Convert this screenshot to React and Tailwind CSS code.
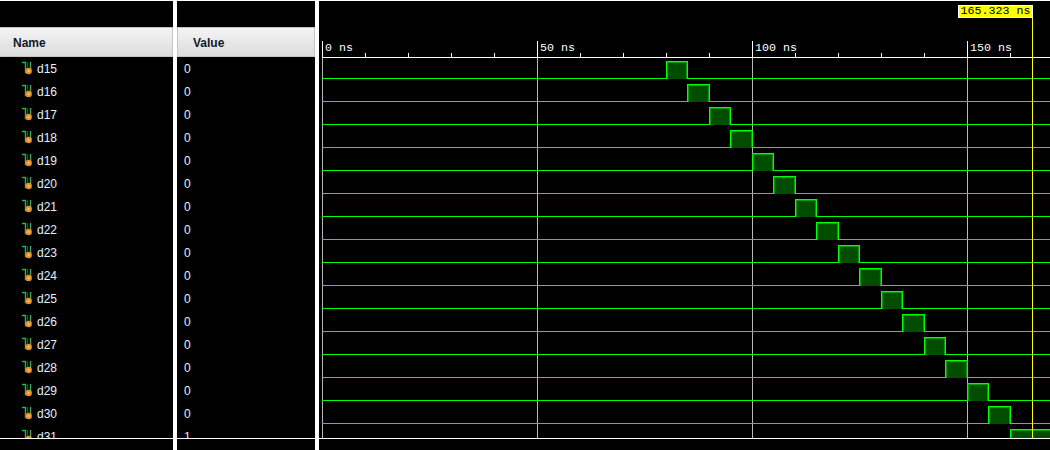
const rows = [
  ['d15', '0'], ['d16', '0'], ['d17', '0'], ['d18', '0'], ['d19', '0'], ['d20', '0'],
  ['d21', '0'], ['d22', '0'], ['d23', '0'], ['d24', '0'], ['d25', '0'], ['d26', '0'],
  ['d27', '0'], ['d28', '0'], ['d29', '0'], ['d30', '0'], ['d31', '1'],
]

// 215px = 50ns, x0 is 3px into the wave panel
const PX_NS = 4.3
const X0 = 3
const xAt = (ns) => Math.floor(X0 + ns * PX_NS)
const W = 731

const SignalIcon = () => (
  <svg width="14" height="15" viewBox="0 0 14 15" className="shrink-0">
    <path d="M2 1.5H5.5V11.5H7" fill="none" stroke="#2fb04f" strokeWidth="1.4" />
    <path d="M10.5 1V8" fill="none" stroke="#2fb04f" strokeWidth="1.4" />
    <path d="M7.5 1V7" fill="none" stroke="#14602a" />
    <circle cx="8.7" cy="10" r="3.2" fill="#e8912a" />
    <circle cx="8.7" cy="10" r="1" fill="#ffd27a" />
  </svg>
)

const Header = ({ label, className }) => (
  <div
    className={`h-[30px] shrink-0 flex items-center pt-[2px] border-y border-[#c4c4c4] bg-gradient-to-b from-[#f4f4f4] to-[#dcdcdc] text-[12px] font-bold text-[#111827] ${className}`}
  >
    {label}
  </div>
)

const Wave = () => (
  <svg width={W} height="380" viewBox="0 0 731 380" shapeRendering="crispEdges" className="block">
    {[0, 50, 100, 150].map((ns) => (
      <path key={ns} d={`M${xAt(ns) + 0.5} 0V380`} stroke="#b8b8b8" />
    ))}
    {rows.map((row, i) => {
      const start = xAt(80 + i * 5)
      const high = row[1] === '1'
      const end = high ? W + 2 : xAt(85 + i * 5)
      const top = 3.5 + i * 23
      const base = 20.5 + i * 23
      return (
        <g key={row[0]}>
          <rect x={start} y={top} width={end - start} height={base - top} fill="#004d00" />
          {/* soft inner edge, the reference pulses look 2px thick */}
          <path
            d={`M${start + 1.5} ${base}V${top + 1}H${end - 0.5}V${base}`}
            fill="none"
            stroke="#00a000"
          />
          <path
            d={`M3 ${base}H${start + 0.5}V${top}H${end + 0.5}V${base}H${W}`}
            fill="none"
            stroke="#00ff00"
          />
        </g>
      )
    })}
  </svg>
)

const Ruler = () => {
  const ticks = []
  for (let ns = 0; ns <= 170; ns += 10) ticks.push(ns)
  return (
    <svg width={W} height="31" viewBox="0 0 731 31" shapeRendering="crispEdges" className="block">
      <path d="M3 30.5H731" stroke="#ffffff" />
      {ticks.map((ns) =>
        ns % 50 === 0 ? (
          <g key={ns}>
            <path d={`M${xAt(ns) + 0.5} 14V31`} stroke="#ffffff" />
            <text
              x={xAt(ns) + 3}
              y="24"
              fill="#ffffff"
              fontSize="11.67"
              fontFamily='"Liberation Mono", monospace'
            >
              {ns} ns
            </text>
          </g>
        ) : (
          <path key={ns} d={`M${xAt(ns) + 0.5} 26V31`} stroke="#ffffff" />
        )
      )}
    </svg>
  )
}

export default function App() {
  return (
    <div className="relative w-[1050px] h-[450px] bg-black overflow-hidden font-['Liberation_Sans',Arial,sans-serif]">
      <div className="h-px bg-white" />
      <div className="flex h-[449px]">
        {/* names */}
        <div className="w-[173px] flex flex-col">
          <div className="h-[26px] shrink-0" />
          <Header label="Name" className="pl-[13px] border-r" />
          <div className="h-[382px] overflow-hidden border-b border-white">
            {rows.map((row) => (
              <div key={row[0]} className="h-[23px] flex items-center pl-[20px] gap-[3px] text-[12px] text-[#e5efff]">
                <SignalIcon />
                <span>{row[0]}</span>
              </div>
            ))}
          </div>
        </div>
        <div className="w-[4px] bg-white" />

        {/* values */}
        <div className="w-[138px] flex flex-col">
          <div className="h-[26px] shrink-0" />
          <Header label="Value" className="pl-[15px] border-x" />
          <div className="h-[382px] overflow-hidden border-b border-white">
            {rows.map((row) => (
              <div key={row[0]} className="h-[23px] flex items-center pl-[7px] text-[12px] text-[#e5efff]">
                {row[1]}
              </div>
            ))}
          </div>
        </div>
        <div className="w-[4px] bg-white" />

        {/* waveform */}
        <div className="relative w-[731px]">
          <div className="h-[26px]" />
          <Ruler />
          <div className="h-[381px] overflow-hidden border-b border-white">
            <Wave />
          </div>
          {/* cursor */}
          <div className="absolute left-[713px] top-[17px] w-px h-[420px] bg-[#ffff00]" />
          <div className="absolute left-[639px] top-[4px] w-[75px] h-[13px] bg-[#ffff00] border border-white text-black text-[11.67px] leading-[11px] text-center font-['Liberation_Mono',monospace]">
            165.323 ns
          </div>
        </div>
      </div>
    </div>
  )
}
